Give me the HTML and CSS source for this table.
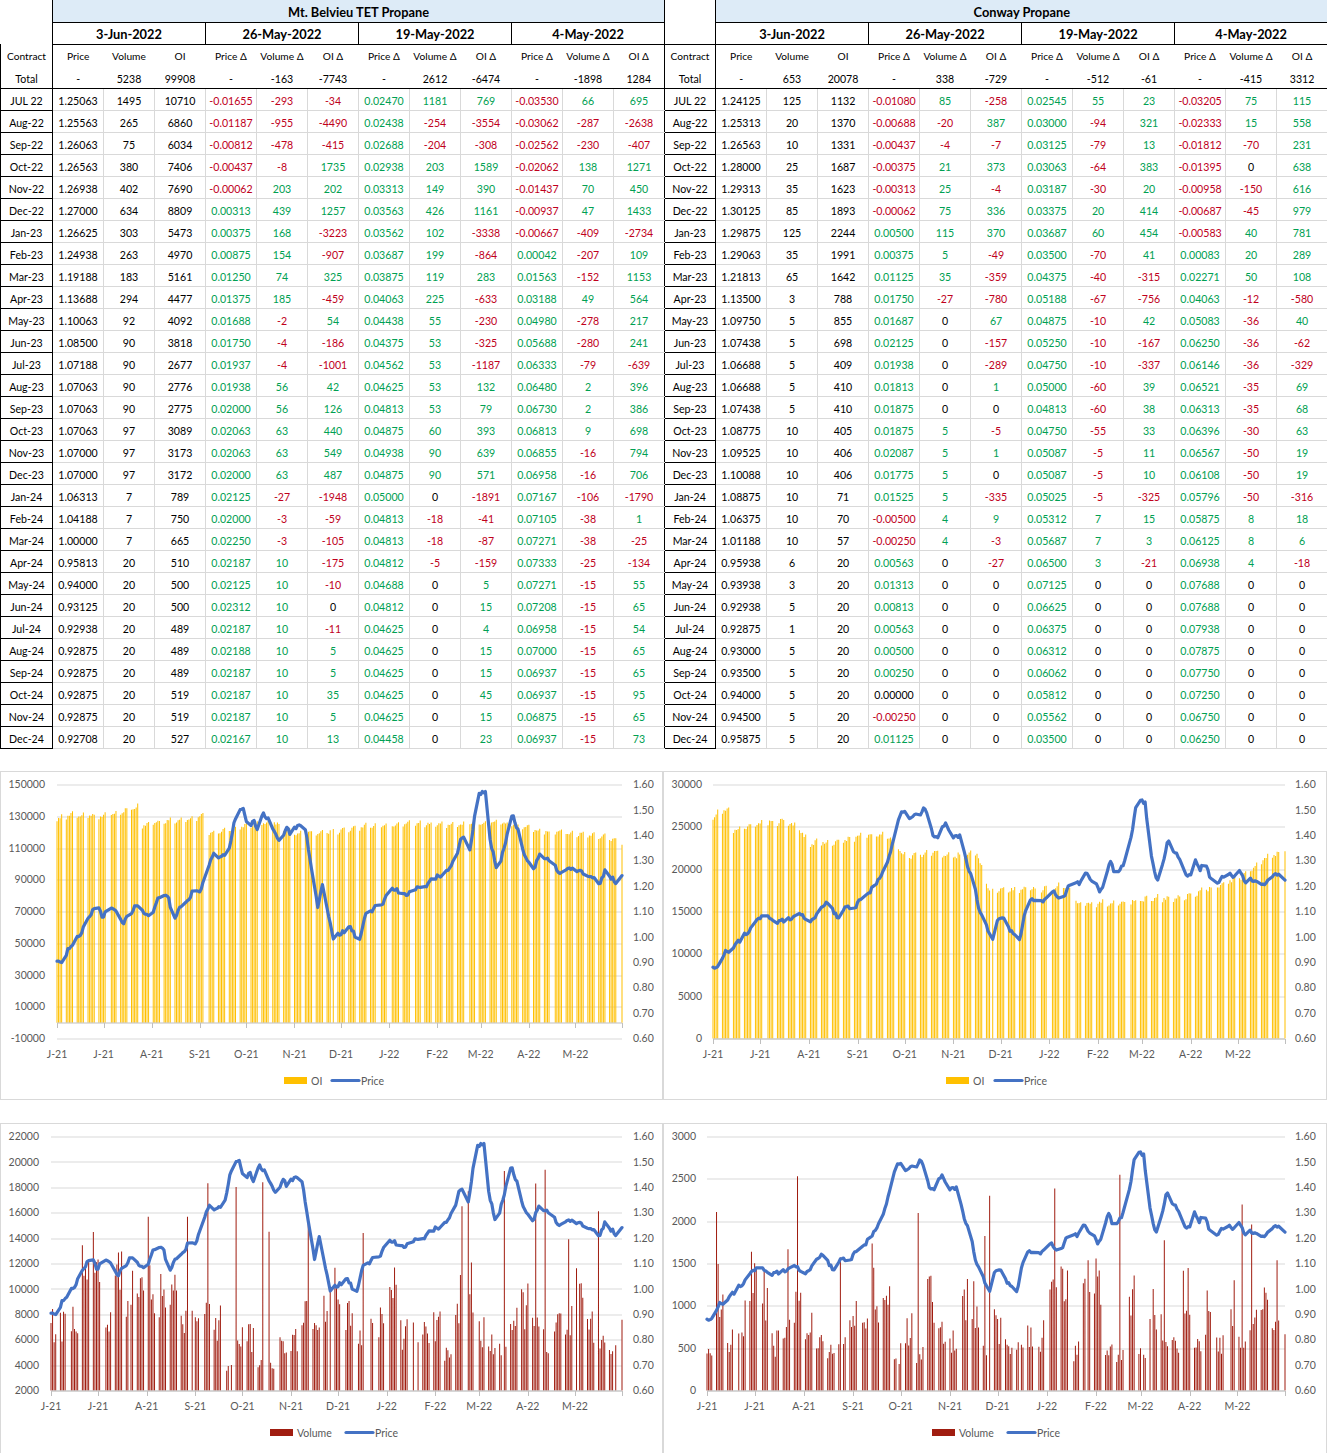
FILE: index.html
```html
<!DOCTYPE html>
<html lang="en">
<head>
<meta charset="utf-8">
<title>Propane Futures – Mt. Belvieu TET / Conway</title>
<link rel="stylesheet" href="styles.css">
</head>
<body>
<table class="sheet">
<colgroup>
<col class="cc"><col class="dc"><col class="dc"><col class="dc"><col class="dc"><col class="dc"><col class="dc"><col class="dc"><col class="dc"><col class="dc"><col class="dc"><col class="dc"><col class="dc">
<col class="cc2"><col class="dc"><col class="dc"><col class="dc"><col class="dc"><col class="dc"><col class="dc"><col class="dc"><col class="dc"><col class="dc"><col class="dc"><col class="dc"><col class="dc">
</colgroup>
<thead>
<tr class="r-title"><td class="corner"></td><td class="title" colspan="12">Mt. Belvieu TET Propane</td><td class="corner mid"></td><td class="title" colspan="12">Conway Propane</td></tr>
<tr class="r-date"><td class="corner"></td><td class="date" colspan="3">3-Jun-2022</td><td class="date" colspan="3">26-May-2022</td><td class="date" colspan="3">19-May-2022</td><td class="date" colspan="3">4-May-2022</td><td class="corner mid db"></td><td class="date" colspan="3">3-Jun-2022</td><td class="date" colspan="3">26-May-2022</td><td class="date" colspan="3">19-May-2022</td><td class="date" colspan="3">4-May-2022</td></tr>
<tr class="r-head"><th>Contract</th><td>Price</td><td>Volume</td><td>OI</td><td>Price &Delta;</td><td>Volume &Delta;</td><td>OI &Delta;</td><td>Price &Delta;</td><td>Volume &Delta;</td><td>OI &Delta;</td><td>Price &Delta;</td><td>Volume &Delta;</td><td>OI &Delta;</td><th>Contract</th><td>Price</td><td>Volume</td><td>OI</td><td>Price &Delta;</td><td>Volume &Delta;</td><td>OI &Delta;</td><td>Price &Delta;</td><td>Volume &Delta;</td><td>OI &Delta;</td><td>Price &Delta;</td><td>Volume &Delta;</td><td>OI &Delta;</td></tr>
<tr class="r-total"><th>Total</th><td>-</td><td>5238</td><td>99908</td><td>-</td><td>-163</td><td>-7743</td><td>-</td><td>2612</td><td>-6474</td><td>-</td><td>-1898</td><td>1284</td><th>Total</th><td>-</td><td>653</td><td>20078</td><td>-</td><td>338</td><td>-729</td><td>-</td><td>-512</td><td>-61</td><td>-</td><td>-415</td><td>3312</td></tr>
</thead>
<tbody>
<tr><th>JUL 22</th><td>1.25063</td><td>1495</td><td>10710</td><td class="r">-0.01655</td><td class="r">-293</td><td class="r">-34</td><td class="g">0.02470</td><td class="g">1181</td><td class="g">769</td><td class="r">-0.03530</td><td class="g">66</td><td class="g">695</td><th>JUL 22</th><td>1.24125</td><td>125</td><td>1132</td><td class="r">-0.01080</td><td class="g">85</td><td class="r">-258</td><td class="g">0.02545</td><td class="g">55</td><td class="g">23</td><td class="r">-0.03205</td><td class="g">75</td><td class="g">115</td></tr>
<tr><th>Aug-22</th><td>1.25563</td><td>265</td><td>6860</td><td class="r">-0.01187</td><td class="r">-955</td><td class="r">-4490</td><td class="g">0.02438</td><td class="r">-254</td><td class="r">-3554</td><td class="r">-0.03062</td><td class="r">-287</td><td class="r">-2638</td><th>Aug-22</th><td>1.25313</td><td>20</td><td>1370</td><td class="r">-0.00688</td><td class="r">-20</td><td class="g">387</td><td class="g">0.03000</td><td class="r">-94</td><td class="g">321</td><td class="r">-0.02333</td><td class="g">15</td><td class="g">558</td></tr>
<tr><th>Sep-22</th><td>1.26063</td><td>75</td><td>6034</td><td class="r">-0.00812</td><td class="r">-478</td><td class="r">-415</td><td class="g">0.02688</td><td class="r">-204</td><td class="r">-308</td><td class="r">-0.02562</td><td class="r">-230</td><td class="r">-407</td><th>Sep-22</th><td>1.26563</td><td>10</td><td>1331</td><td class="r">-0.00437</td><td class="r">-4</td><td class="r">-7</td><td class="g">0.03125</td><td class="r">-79</td><td class="g">13</td><td class="r">-0.01812</td><td class="r">-70</td><td class="g">231</td></tr>
<tr><th>Oct-22</th><td>1.26563</td><td>380</td><td>7406</td><td class="r">-0.00437</td><td class="r">-8</td><td class="g">1735</td><td class="g">0.02938</td><td class="g">203</td><td class="g">1589</td><td class="r">-0.02062</td><td class="g">138</td><td class="g">1271</td><th>Oct-22</th><td>1.28000</td><td>25</td><td>1687</td><td class="r">-0.00375</td><td class="g">21</td><td class="g">373</td><td class="g">0.03063</td><td class="r">-64</td><td class="g">383</td><td class="r">-0.01395</td><td>0</td><td class="g">638</td></tr>
<tr><th>Nov-22</th><td>1.26938</td><td>402</td><td>7690</td><td class="r">-0.00062</td><td class="g">203</td><td class="g">202</td><td class="g">0.03313</td><td class="g">149</td><td class="g">390</td><td class="r">-0.01437</td><td class="g">70</td><td class="g">450</td><th>Nov-22</th><td>1.29313</td><td>35</td><td>1623</td><td class="r">-0.00313</td><td class="g">25</td><td class="r">-4</td><td class="g">0.03187</td><td class="r">-30</td><td class="g">20</td><td class="r">-0.00958</td><td class="r">-150</td><td class="g">616</td></tr>
<tr><th>Dec-22</th><td>1.27000</td><td>634</td><td>8809</td><td class="g">0.00313</td><td class="g">439</td><td class="g">1257</td><td class="g">0.03563</td><td class="g">426</td><td class="g">1161</td><td class="r">-0.00937</td><td class="g">47</td><td class="g">1433</td><th>Dec-22</th><td>1.30125</td><td>85</td><td>1893</td><td class="r">-0.00062</td><td class="g">75</td><td class="g">336</td><td class="g">0.03375</td><td class="g">20</td><td class="g">414</td><td class="r">-0.00687</td><td class="r">-45</td><td class="g">979</td></tr>
<tr><th>Jan-23</th><td>1.26625</td><td>303</td><td>5473</td><td class="g">0.00375</td><td class="g">168</td><td class="r">-3223</td><td class="g">0.03562</td><td class="g">102</td><td class="r">-3338</td><td class="r">-0.00667</td><td class="r">-409</td><td class="r">-2734</td><th>Jan-23</th><td>1.29875</td><td>125</td><td>2244</td><td class="g">0.00500</td><td class="g">115</td><td class="g">370</td><td class="g">0.03687</td><td class="g">60</td><td class="g">454</td><td class="r">-0.00583</td><td class="g">40</td><td class="g">781</td></tr>
<tr><th>Feb-23</th><td>1.24938</td><td>263</td><td>4970</td><td class="g">0.00875</td><td class="g">154</td><td class="r">-907</td><td class="g">0.03687</td><td class="g">199</td><td class="r">-864</td><td class="g">0.00042</td><td class="r">-207</td><td class="g">109</td><th>Feb-23</th><td>1.29063</td><td>35</td><td>1991</td><td class="g">0.00375</td><td class="g">5</td><td class="r">-49</td><td class="g">0.03500</td><td class="r">-70</td><td class="g">41</td><td class="g">0.00083</td><td class="g">20</td><td class="g">289</td></tr>
<tr><th>Mar-23</th><td>1.19188</td><td>183</td><td>5161</td><td class="g">0.01250</td><td class="g">74</td><td class="g">325</td><td class="g">0.03875</td><td class="g">119</td><td class="g">283</td><td class="g">0.01563</td><td class="r">-152</td><td class="g">1153</td><th>Mar-23</th><td>1.21813</td><td>65</td><td>1642</td><td class="g">0.01125</td><td class="g">35</td><td class="r">-359</td><td class="g">0.04375</td><td class="r">-40</td><td class="r">-315</td><td class="g">0.02271</td><td class="g">50</td><td class="g">108</td></tr>
<tr><th>Apr-23</th><td>1.13688</td><td>294</td><td>4477</td><td class="g">0.01375</td><td class="g">185</td><td class="r">-459</td><td class="g">0.04063</td><td class="g">225</td><td class="r">-633</td><td class="g">0.03188</td><td class="g">49</td><td class="g">564</td><th>Apr-23</th><td>1.13500</td><td>3</td><td>788</td><td class="g">0.01750</td><td class="r">-27</td><td class="r">-780</td><td class="g">0.05188</td><td class="r">-67</td><td class="r">-756</td><td class="g">0.04063</td><td class="r">-12</td><td class="r">-580</td></tr>
<tr><th>May-23</th><td>1.10063</td><td>92</td><td>4092</td><td class="g">0.01688</td><td class="r">-2</td><td class="g">54</td><td class="g">0.04438</td><td class="g">55</td><td class="r">-230</td><td class="g">0.04980</td><td class="r">-278</td><td class="g">217</td><th>May-23</th><td>1.09750</td><td>5</td><td>855</td><td class="g">0.01687</td><td>0</td><td class="g">67</td><td class="g">0.04875</td><td class="r">-10</td><td class="g">42</td><td class="g">0.05083</td><td class="r">-36</td><td class="g">40</td></tr>
<tr><th>Jun-23</th><td>1.08500</td><td>90</td><td>3818</td><td class="g">0.01750</td><td class="r">-4</td><td class="r">-186</td><td class="g">0.04375</td><td class="g">53</td><td class="r">-325</td><td class="g">0.05688</td><td class="r">-280</td><td class="g">241</td><th>Jun-23</th><td>1.07438</td><td>5</td><td>698</td><td class="g">0.02125</td><td>0</td><td class="r">-157</td><td class="g">0.05250</td><td class="r">-10</td><td class="r">-167</td><td class="g">0.06250</td><td class="r">-36</td><td class="r">-62</td></tr>
<tr><th>Jul-23</th><td>1.07188</td><td>90</td><td>2677</td><td class="g">0.01937</td><td class="r">-4</td><td class="r">-1001</td><td class="g">0.04562</td><td class="g">53</td><td class="r">-1187</td><td class="g">0.06333</td><td class="r">-79</td><td class="r">-639</td><th>Jul-23</th><td>1.06688</td><td>5</td><td>409</td><td class="g">0.01938</td><td>0</td><td class="r">-289</td><td class="g">0.04750</td><td class="r">-10</td><td class="r">-337</td><td class="g">0.06146</td><td class="r">-36</td><td class="r">-329</td></tr>
<tr><th>Aug-23</th><td>1.07063</td><td>90</td><td>2776</td><td class="g">0.01938</td><td class="g">56</td><td class="g">42</td><td class="g">0.04625</td><td class="g">53</td><td class="g">132</td><td class="g">0.06480</td><td class="g">2</td><td class="g">396</td><th>Aug-23</th><td>1.06688</td><td>5</td><td>410</td><td class="g">0.01813</td><td>0</td><td class="g">1</td><td class="g">0.05000</td><td class="r">-60</td><td class="g">39</td><td class="g">0.06521</td><td class="r">-35</td><td class="g">69</td></tr>
<tr><th>Sep-23</th><td>1.07063</td><td>90</td><td>2775</td><td class="g">0.02000</td><td class="g">56</td><td class="g">126</td><td class="g">0.04813</td><td class="g">53</td><td class="g">79</td><td class="g">0.06730</td><td class="g">2</td><td class="g">386</td><th>Sep-23</th><td>1.07438</td><td>5</td><td>410</td><td class="g">0.01875</td><td>0</td><td>0</td><td class="g">0.04813</td><td class="r">-60</td><td class="g">38</td><td class="g">0.06313</td><td class="r">-35</td><td class="g">68</td></tr>
<tr><th>Oct-23</th><td>1.07063</td><td>97</td><td>3089</td><td class="g">0.02063</td><td class="g">63</td><td class="g">440</td><td class="g">0.04875</td><td class="g">60</td><td class="g">393</td><td class="g">0.06813</td><td class="g">9</td><td class="g">698</td><th>Oct-23</th><td>1.08775</td><td>10</td><td>405</td><td class="g">0.01875</td><td class="g">5</td><td class="r">-5</td><td class="g">0.04750</td><td class="r">-55</td><td class="g">33</td><td class="g">0.06396</td><td class="r">-30</td><td class="g">63</td></tr>
<tr><th>Nov-23</th><td>1.07000</td><td>97</td><td>3173</td><td class="g">0.02063</td><td class="g">63</td><td class="g">549</td><td class="g">0.04938</td><td class="g">90</td><td class="g">639</td><td class="g">0.06855</td><td class="r">-16</td><td class="g">794</td><th>Nov-23</th><td>1.09525</td><td>10</td><td>406</td><td class="g">0.02087</td><td class="g">5</td><td class="g">1</td><td class="g">0.05087</td><td class="r">-5</td><td class="g">11</td><td class="g">0.06567</td><td class="r">-50</td><td class="g">19</td></tr>
<tr><th>Dec-23</th><td>1.07000</td><td>97</td><td>3172</td><td class="g">0.02000</td><td class="g">63</td><td class="g">487</td><td class="g">0.04875</td><td class="g">90</td><td class="g">571</td><td class="g">0.06958</td><td class="r">-16</td><td class="g">706</td><th>Dec-23</th><td>1.10088</td><td>10</td><td>406</td><td class="g">0.01775</td><td class="g">5</td><td>0</td><td class="g">0.05087</td><td class="r">-5</td><td class="g">10</td><td class="g">0.06108</td><td class="r">-50</td><td class="g">19</td></tr>
<tr><th>Jan-24</th><td>1.06313</td><td>7</td><td>789</td><td class="g">0.02125</td><td class="r">-27</td><td class="r">-1948</td><td class="g">0.05000</td><td>0</td><td class="r">-1891</td><td class="g">0.07167</td><td class="r">-106</td><td class="r">-1790</td><th>Jan-24</th><td>1.08875</td><td>10</td><td>71</td><td class="g">0.01525</td><td class="g">5</td><td class="r">-335</td><td class="g">0.05025</td><td class="r">-5</td><td class="r">-325</td><td class="g">0.05796</td><td class="r">-50</td><td class="r">-316</td></tr>
<tr><th>Feb-24</th><td>1.04188</td><td>7</td><td>750</td><td class="g">0.02000</td><td class="r">-3</td><td class="r">-59</td><td class="g">0.04813</td><td class="r">-18</td><td class="r">-41</td><td class="g">0.07105</td><td class="r">-38</td><td class="g">1</td><th>Feb-24</th><td>1.06375</td><td>10</td><td>70</td><td class="r">-0.00500</td><td class="g">4</td><td class="g">9</td><td class="g">0.05312</td><td class="g">7</td><td class="g">15</td><td class="g">0.05875</td><td class="g">8</td><td class="g">18</td></tr>
<tr><th>Mar-24</th><td>1.00000</td><td>7</td><td>665</td><td class="g">0.02250</td><td class="r">-3</td><td class="r">-105</td><td class="g">0.04813</td><td class="r">-18</td><td class="r">-87</td><td class="g">0.07271</td><td class="r">-38</td><td class="r">-25</td><th>Mar-24</th><td>1.01188</td><td>10</td><td>57</td><td class="r">-0.00250</td><td class="g">4</td><td class="r">-3</td><td class="g">0.05687</td><td class="g">7</td><td class="g">3</td><td class="g">0.06125</td><td class="g">8</td><td class="g">6</td></tr>
<tr><th>Apr-24</th><td>0.95813</td><td>20</td><td>510</td><td class="g">0.02187</td><td class="g">10</td><td class="r">-175</td><td class="g">0.04812</td><td class="r">-5</td><td class="r">-159</td><td class="g">0.07333</td><td class="r">-25</td><td class="r">-134</td><th>Apr-24</th><td>0.95938</td><td>6</td><td>20</td><td class="g">0.00563</td><td>0</td><td class="r">-27</td><td class="g">0.06500</td><td class="g">3</td><td class="r">-21</td><td class="g">0.06938</td><td class="g">4</td><td class="r">-18</td></tr>
<tr><th>May-24</th><td>0.94000</td><td>20</td><td>500</td><td class="g">0.02125</td><td class="g">10</td><td class="r">-10</td><td class="g">0.04688</td><td>0</td><td class="g">5</td><td class="g">0.07271</td><td class="r">-15</td><td class="g">55</td><th>May-24</th><td>0.93938</td><td>3</td><td>20</td><td class="g">0.01313</td><td>0</td><td>0</td><td class="g">0.07125</td><td>0</td><td>0</td><td class="g">0.07688</td><td>0</td><td>0</td></tr>
<tr><th>Jun-24</th><td>0.93125</td><td>20</td><td>500</td><td class="g">0.02312</td><td class="g">10</td><td>0</td><td class="g">0.04812</td><td>0</td><td class="g">15</td><td class="g">0.07208</td><td class="r">-15</td><td class="g">65</td><th>Jun-24</th><td>0.92938</td><td>5</td><td>20</td><td class="g">0.00813</td><td>0</td><td>0</td><td class="g">0.06625</td><td>0</td><td>0</td><td class="g">0.07688</td><td>0</td><td>0</td></tr>
<tr><th>Jul-24</th><td>0.92938</td><td>20</td><td>489</td><td class="g">0.02187</td><td class="g">10</td><td class="r">-11</td><td class="g">0.04625</td><td>0</td><td class="g">4</td><td class="g">0.06958</td><td class="r">-15</td><td class="g">54</td><th>Jul-24</th><td>0.92875</td><td>1</td><td>20</td><td class="g">0.00563</td><td>0</td><td>0</td><td class="g">0.06375</td><td>0</td><td>0</td><td class="g">0.07938</td><td>0</td><td>0</td></tr>
<tr><th>Aug-24</th><td>0.92875</td><td>20</td><td>489</td><td class="g">0.02188</td><td class="g">10</td><td class="g">5</td><td class="g">0.04625</td><td>0</td><td class="g">15</td><td class="g">0.07000</td><td class="r">-15</td><td class="g">65</td><th>Aug-24</th><td>0.93000</td><td>5</td><td>20</td><td class="g">0.00500</td><td>0</td><td>0</td><td class="g">0.06312</td><td>0</td><td>0</td><td class="g">0.07875</td><td>0</td><td>0</td></tr>
<tr><th>Sep-24</th><td>0.92875</td><td>20</td><td>489</td><td class="g">0.02187</td><td class="g">10</td><td class="g">5</td><td class="g">0.04625</td><td>0</td><td class="g">15</td><td class="g">0.06937</td><td class="r">-15</td><td class="g">65</td><th>Sep-24</th><td>0.93500</td><td>5</td><td>20</td><td class="g">0.00250</td><td>0</td><td>0</td><td class="g">0.06062</td><td>0</td><td>0</td><td class="g">0.07750</td><td>0</td><td>0</td></tr>
<tr><th>Oct-24</th><td>0.92875</td><td>20</td><td>519</td><td class="g">0.02187</td><td class="g">10</td><td class="g">35</td><td class="g">0.04625</td><td>0</td><td class="g">45</td><td class="g">0.06937</td><td class="r">-15</td><td class="g">95</td><th>Oct-24</th><td>0.94000</td><td>5</td><td>20</td><td>0.00000</td><td>0</td><td>0</td><td class="g">0.05812</td><td>0</td><td>0</td><td class="g">0.07250</td><td>0</td><td>0</td></tr>
<tr><th>Nov-24</th><td>0.92875</td><td>20</td><td>519</td><td class="g">0.02187</td><td class="g">10</td><td class="g">5</td><td class="g">0.04625</td><td>0</td><td class="g">15</td><td class="g">0.06875</td><td class="r">-15</td><td class="g">65</td><th>Nov-24</th><td>0.94500</td><td>5</td><td>20</td><td class="r">-0.00250</td><td>0</td><td>0</td><td class="g">0.05562</td><td>0</td><td>0</td><td class="g">0.06750</td><td>0</td><td>0</td></tr>
<tr><th>Dec-24</th><td>0.92708</td><td>20</td><td>527</td><td class="g">0.02167</td><td class="g">10</td><td class="g">13</td><td class="g">0.04458</td><td>0</td><td class="g">23</td><td class="g">0.06937</td><td class="r">-15</td><td class="g">73</td><th>Dec-24</th><td>0.95875</td><td>5</td><td>20</td><td class="g">0.01125</td><td>0</td><td>0</td><td class="g">0.03500</td><td>0</td><td>0</td><td class="g">0.06250</td><td>0</td><td>0</td></tr>
</tbody>
</table>

<div class="charts">
  <div class="chart-row top">
    <div class="chart chart-l"><svg id="c1" xmlns="http://www.w3.org/2000/svg"></svg></div>
    <div class="chart chart-r"><svg id="c2" xmlns="http://www.w3.org/2000/svg"></svg></div>
  </div>
  <div class="chart-row bottom">
    <div class="chart chart-l"><svg id="c3" xmlns="http://www.w3.org/2000/svg"></svg></div>
    <div class="chart chart-r"><svg id="c4" xmlns="http://www.w3.org/2000/svg"></svg></div>
  </div>
</div>
<script src="script.js"></script>
</body>
</html>
```

FILE: styles.css
```css
* { box-sizing: border-box; }
html, body { margin: 0; padding: 0; background: #fff; }
body { width: 1327px; font-family: Lato, "Open Sans", "Liberation Sans", sans-serif; color: #000; }

.sheet { border-collapse: collapse; table-layout: fixed; width: 1327px; font-size: 10.6px; }
.sheet col.cc { width: 52px; }
.sheet col.cc2 { width: 51px; }
.sheet col.dc { width: 51px; }
.sheet tr { height: 22px; }
.sheet td, .sheet th {
  padding: 0 0 2px;
  text-align: center;
  vertical-align: bottom;
  line-height: 13px;
  font-weight: 400;
  white-space: nowrap;
  overflow: hidden;
}
.sheet .corner { border-right: 1px solid #000; }
.sheet .corner.mid { border-left: 1px solid #000; }
.sheet .corner.db { border-bottom: 1px solid #000; }
.sheet .title { background: #ddebf7; font-weight: 700; font-size: 12.8px; border-bottom: 1px solid #000; padding-bottom: 3px; }
.sheet .date { font-weight: 700; font-size: 12.8px; border-left: 1px solid #000; border-right: 1px solid #000; border-bottom: 1px solid #000; padding-bottom: 3px; }
.sheet .r-head td, .sheet .r-head th { padding-bottom: 3px; font-size: 10.2px; }
.sheet .r-head th { border-left: 1px solid #000; border-right: 1px solid #000; }
.sheet .r-total td, .sheet .r-total th { border-bottom: 1px solid #000; }
.sheet .r-total th { border-left: 1px solid #000; border-right: 1px solid #000; }
.sheet tbody td { border-left: 1px solid #d9d9d9; border-bottom: 1px solid #d9d9d9; }
.sheet tbody td:last-child { border-right: 1px solid #d9d9d9; }
.sheet tbody th { border: 1px solid #000; }
.sheet .r { color: #c0001c; }
.sheet .g { color: #00a052; }

.charts { display: flex; flex-direction: column; gap: 23px; padding-top: 22px; }
.chart-row { display: flex; }
.chart { border: 1px solid #d9d9d9; background: #fff; }
.chart-row.top .chart { height: 329px; }
.chart-row.bottom .chart { height: 331px; }
.chart-l { width: 663px; }
.chart-r { width: 664px; }
.chart svg { display: block; width: 100%; height: 100%; overflow: hidden; }
.chart .ax, .chart .lg { font-family: Lato, "Open Sans", "Liberation Sans", sans-serif; font-size: 10.5px; fill: #595959; }
.chart .grid { stroke: #d9d9d9; stroke-width: 1; }
.chart .axis { stroke: #bfbfbf; stroke-width: 1; }
.chart .price { fill: none; stroke: #4472c4; stroke-width: 3.2; stroke-linejoin: round; stroke-linecap: round; }
```

FILE: script.js
```js
(function () {
  var NS = 'http://www.w3.org/2000/svg';
  function el(tag, attrs, parent) {
    var e = document.createElementNS(NS, tag);
    for (var k in attrs) e.setAttribute(k, attrs[k]);
    if (parent) parent.appendChild(e);
    return e;
  }
  function txt(parent, x, y, s, anchor, cls) {
    var t = el('text', { x: x, y: y, 'text-anchor': anchor || 'start', 'class': cls || 'ax' }, parent);
    t.textContent = s;
    return t;
  }
  var seed = 20220603;
  function rnd() { seed = (seed * 16807) % 2147483647; return (seed - 1) / 2147483646; }
  function interp(kp, x) {
    if (x <= kp[0][0]) return kp[0][1];
    for (var i = 1; i < kp.length; i++) {
      if (x <= kp[i][0]) {
        var a = kp[i - 1], b = kp[i];
        return a[1] + (b[1] - a[1]) * (x - a[0]) / (b[0] - a[0]);
      }
    }
    return kp[kp.length - 1][1];
  }

  var END = 364;
  var holidays = { 34: 1, 97: 1, 177: 1, 206: 1, 213: 1, 230: 1, 265: 1, 318: 1, 363: 1 };
  var days = [];
  for (var d = 0; d <= END; d++) {
    var wd = (2 + d) % 7;
    if (wd === 0 || wd === 6 || holidays[d]) continue;
    days.push(d);
  }

  var PL = [[0,0.91],[8,0.91],[11,0.95],[18,0.95],[20,0.98],[26,1.03],[35,1.10],[43,1.115],[46,1.07],[50,1.10],[58,1.10],[65,1.045],[72,1.08],[81,1.13],[87,1.10],[95,1.10],[100,1.15],[112,1.15],[115,1.07],[122,1.10],[130,1.15],[136,1.19],[143,1.18],[148,1.23],[156,1.32],[165,1.31],[173,1.36],[176,1.43],[181,1.49],[186,1.51],[190,1.44],[196,1.45],[200,1.43],[206,1.48],[211,1.47],[215,1.43],[220,1.39],[223,1.38],[230,1.43],[233,1.39],[241,1.44],[248,1.42],[256,1.22],[261,1.10],[265,1.20],[270,1.10],[276,0.99],[283,1.01],[293,1.04],[301,0.98],[308,1.08],[323,1.12],[338,1.19],[348,1.16],[363,1.20],[373,1.21],[388,1.26],[398,1.30],[406,1.40],[413,1.35],[418,1.50],[421,1.57],[430,1.56],[433,1.38],[440,1.26],[448,1.36],[455,1.48],[461,1.43],[468,1.32],[476,1.28],[483,1.32],[493,1.29],[503,1.25],[513,1.28],[528,1.24],[543,1.21],[548,1.26],[558,1.22],[565,1.24]];
  var PR = [[0,0.89],[7,0.895],[12,0.93],[27,0.98],[40,1.05],[47,1.08],[52,1.09],[60,1.08],[67,1.06],[75,1.07],[87,1.08],[95,1.06],[105,1.09],[112,1.14],[118,1.14],[125,1.07],[135,1.12],[142,1.11],[150,1.16],[160,1.20],[167,1.24],[172,1.28],[178,1.34],[182,1.39],[187,1.48],[192,1.50],[197,1.46],[202,1.49],[207,1.47],[212,1.50],[217,1.43],[222,1.38],[227,1.41],[232,1.45],[240,1.40],[247,1.40],[255,1.28],[262,1.18],[267,1.10],[275,1.02],[280,0.98],[285,1.08],[292,1.05],[300,1.01],[307,0.99],[312,1.10],[317,1.14],[325,1.14],[332,1.15],[340,1.17],[350,1.17],[357,1.20],[367,1.21],[372,1.25],[380,1.23],[387,1.18],[392,1.21],[397,1.30],[402,1.25],[410,1.29],[417,1.36],[422,1.50],[427,1.53],[432,1.53],[437,1.33],[445,1.22],[450,1.30],[455,1.38],[460,1.34],[465,1.32],[470,1.27],[477,1.24],[482,1.30],[487,1.27],[492,1.30],[497,1.24],[505,1.21],[512,1.23],[520,1.24],[527,1.26],[532,1.21],[537,1.24],[547,1.22],[555,1.22],[562,1.24],[568,1.24],[572,1.23]];

  function priceSeries(kp, k) {
    var drift = 0;
    return days.map(function (d) {
      drift = drift * 0.6 + (rnd() - 0.5) * 0.022;
      return [d, interp(kp, d * k) + drift];
    });
  }
  var priceL = priceSeries(PL, 1.552);
  var priceR = priceSeries(PR, 1.571);

  var OIL = [[0,128000],[10,131000],[25,130000],[35,131000],[42,133000],[54,136500],[55,124500],[70,127000],[90,128500],[92,130500],[96,132000],[97,119000],[110,121000],[122,124500],[140,126000],[153,119000],[170,120000],[183,121000],[200,124000],[230,125500],[260,124500],[280,126000],[300,124000],[310,121000],[325,120000],[340,118500],[355,117000],[364,112000]];
  var OIR = [[0,26200],[7,27000],[10,26800],[11,24500],[20,25000],[30,25500],[45,25700],[55,24800],[61,23000],[80,23300],[92,23800],[110,24200],[122,21500],[140,22000],[153,21500],[168,21800],[176,17600],[200,17600],[225,18000],[232,16000],[260,16000],[280,16500],[300,16700],[320,18000],[335,19000],[350,21000],[364,22300]];

  function oiSeries(kp, step, jitter) {
    return days.map(function (d) {
      var wd = (2 + d) % 7;
      return [d, interp(kp, d) + (wd - 3) * step + (rnd() - 0.5) * jitter];
    });
  }
  var oiL = oiSeries(OIL, 700, 1800);
  var oiR = oiSeries(OIR, 150, 500);

  function volSeries(base0, scale, wbMin, wbRange, fac, spikeP, spikeMin, spikeRange) {
    var out = [], wb = 0, lastWeek = -1;
    days.forEach(function (d) {
      var w = Math.floor((d + 2) / 7);
      if (w !== lastWeek) { lastWeek = w; wb = wbMin + rnd() * wbRange; }
      var v = wb * interp(fac, d) * (0.7 + rnd() * 0.6);
      if (rnd() < spikeP) v = spikeMin + rnd() * spikeRange;
      if (rnd() < 0.08) v = 0;
      out.push([d, base0 + v * scale]);
    });
    return out;
  }
  var volL = volSeries(2000, 17000, 0.2, 0.42, [[0,1],[60,1.05],[95,0.55],[150,0.5],[175,1.0],[240,0.85],[300,0.85],[364,0.8]], 0.07, 0.7, 0.35);
  var volR = volSeries(0, 2600, 0.14, 0.38, [[0,1],[90,1],[130,0.9],[200,1],[300,1],[364,0.9]], 0.06, 0.55, 0.45);

  var TICKS = [0, 30, 61, 92, 122, 153, 183, 214, 245, 273, 304, 334];
  var NAMES = ['J-21', 'J-21', 'A-21', 'S-21', 'O-21', 'N-21', 'D-21', 'J-22', 'F-22', 'M-22', 'A-22', 'M-22'];

  function chart(id, o) {
    var svg = document.getElementById(id);
    var r = svg.getBoundingClientRect();
    var g = el('g', { transform: 'translate(' + (-(r.left + window.scrollX)) + ',' + (-(r.top + window.scrollY)) + ')' }, svg);
    var k = (o.x1 - o.x0) / END;
    function X(d) { return o.x0 + d * k; }
    function YL(v) { return o.gb - (v - o.lmin) / (o.lmax - o.lmin) * (o.gb - o.gt); }
    function YR(p) { return o.gb - (p - 0.6) * (o.gb - o.gt); }
    var n = Math.round((o.lmax - o.lmin) / o.lstep), i;
    for (i = 0; i <= n; i++) {
      var v = o.lmin + i * o.lstep, y = YL(v), yc = Math.round(y) + 0.5;
      el('line', { x1: o.x0, x2: o.x1, y1: yc, y2: yc, 'class': 'grid' }, g);
      txt(g, o.lx, y + 3.6, String(v), 'end');
    }
    for (i = 0; i <= 10; i++) {
      var p = 0.6 + i * 0.1;
      txt(g, o.rx, YR(p) + 3.6, p.toFixed(2), 'start');
    }
    var yb = YL(o.base), ybs = yb.toFixed(2), path = '';
    o.bars.forEach(function (b) {
      if (b[1] <= o.base) return;
      var x = X(b[0]) - 0.5;
      path += 'M' + x.toFixed(2) + ' ' + ybs + 'V' + YL(b[1]).toFixed(2) + 'h1V' + ybs + 'Z';
    });
    el('path', { d: path, fill: o.color }, g);
    var ya = Math.round(yb) + 0.5;
    el('line', { x1: o.x0, x2: o.x1, y1: ya, y2: ya, 'class': 'axis' }, g);
    TICKS.concat([END]).forEach(function (t) {
      var x = Math.round(X(t)) + 0.5;
      el('line', { x1: x, x2: x, y1: ya, y2: ya + 5, 'class': 'axis' }, g);
    });
    TICKS.forEach(function (t, j) { txt(g, X(t), o.xl, NAMES[j], 'middle'); });
    var pts = o.price.map(function (q) { return X(q[0]).toFixed(2) + ',' + YR(q[1]).toFixed(2); }).join(' ');
    el('polyline', { points: pts, 'class': 'price' }, g);
    el('rect', { x: o.sw, y: o.ly - 3.5, width: 23, height: 7, fill: o.color }, g);
    txt(g, o.sw + 27, o.ly + 4, o.name, 'start', 'lg');
    el('line', { x1: o.lw, x2: o.lw + 27, y1: o.ly, y2: o.ly, 'class': 'price' }, g);
    txt(g, o.lw + 29, o.ly + 4, 'Price', 'start', 'lg');
  }

  chart('c1', { x0: 57, x1: 622, gt: 784, gb: 1038, lmin: -10000, lmax: 150000, lstep: 20000, lx: 45, rx: 633, base: 0, xl: 1057, ly: 1080, sw: 284, lw: 332, name: 'OI', color: '#ffc000', bars: oiL, price: priceL });
  chart('c2', { x0: 713, x1: 1285, gt: 784, gb: 1038, lmin: 0, lmax: 30000, lstep: 5000, lx: 702, rx: 1295, base: 0, xl: 1057, ly: 1080, sw: 946, lw: 995, name: 'OI', color: '#ffc000', bars: oiR, price: priceR });
  chart('c3', { x0: 51, x1: 622, gt: 1136, gb: 1390, lmin: 2000, lmax: 22000, lstep: 2000, lx: 39, rx: 633, base: 2000, xl: 1409, ly: 1432, sw: 270, lw: 346, name: 'Volume', color: '#a01d10', bars: volL, price: priceL });
  chart('c4', { x0: 707, x1: 1285, gt: 1136, gb: 1390, lmin: 0, lmax: 3000, lstep: 500, lx: 696, rx: 1295, base: 0, xl: 1409, ly: 1432, sw: 932, lw: 1008, name: 'Volume', color: '#a01d10', bars: volR, price: priceR });
})();
```
